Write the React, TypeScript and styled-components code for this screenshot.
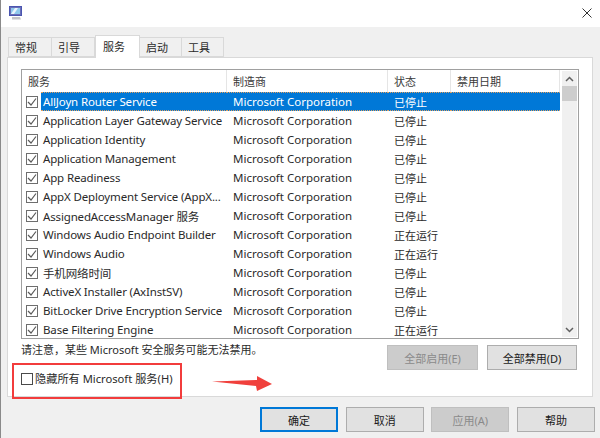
import React from "react"
import styled, { createGlobalStyle } from "styled-components"

const GlobalStyle = createGlobalStyle`
    html, body {
        margin: 0;
        padding: 0;
        background: #fff;
    }
    * {
        box-sizing: border-box;
    }
`;

const FONT = `"Noto Sans", "Noto Sans CJK SC", sans-serif`;
const COLUMNS = "205px 161px 63px 1fr";

const Window = styled.div`
    position: relative;
    width: 600px;
    height: 438px;
    display: flex;
    flex-direction: column;
    overflow: hidden;
    background: #f0f0f0;
    border-left: 1px solid #8a8a8a;
    font-family: ${FONT};
    font-size: 11.5px;
    color: #2a2a2a;
`;

const TitleBar = styled.div`
    height: 27px;
    flex: none;
    background: #fff;
    display: flex;
    align-items: center;
    justify-content: space-between;
    padding: 0 8px 1px 8px;
`;

const Body = styled.div`
    flex: 1;
    display: flex;
    flex-direction: column;
    padding: 8px 6px 0 6px;
`;

const TabStrip = styled.div`
    display: flex;
    height: 22px;
    align-items: flex-end;
    padding-left: 1px;
`;

const Tab = styled.div<{ $active?: boolean; $width: number }>`
    width: ${(p) => p.$width}px;
    height: ${(p) => (p.$active ? 23 : 20)}px;
    margin-bottom: ${(p) => (p.$active ? -1 : 0)}px;
    padding: ${(p) => (p.$active ? "0 0 2px 7px" : "0 0 0 6px")};
    background: ${(p) => (p.$active ? "#fff" : "#f0f0f0")};
    border: 1px solid #d9d9d9;
    border-bottom: ${(p) => (p.$active ? "none" : "1px solid #d9d9d9")};
    border-left: ${(p) => (p.$active ? "1px solid #d9d9d9" : "none")};
    display: flex;
    align-items: center;
    font-size: 11px;
    position: relative;
    z-index: ${(p) => (p.$active ? 1 : 0)};

    &:first-child {
        border-left: 1px solid #d9d9d9;
    }
`;

const Panel = styled.div`
    width: 586px;
    height: 340px;
    background: #fff;
    border: 1px solid #d9d9d9;
    padding: 11px 14px 0 13px;
    display: flex;
    flex-direction: column;
`;

const ListBox = styled.div`
    width: 558px;
    height: 270px;
    flex: none;
    border: 1px solid #a0a0a0;
    display: flex;
`;

const ListArea = styled.div`
    width: 538px;
    display: flex;
    flex-direction: column;
    overflow: hidden;
`;

const HeaderRow = styled.div`
    height: 22px;
    flex: none;
    display: grid;
    grid-template-columns: ${COLUMNS};
`;

const HeaderCell = styled.div`
    padding-left: 6px;
    display: flex;
    align-items: center;
    border-right: 1px solid #e5e5e5;
    font-size: 11px;
    color: #3a3a3a;
`;

const Row = styled.div`
    height: 19px;
    flex: none;
    display: grid;
    grid-template-columns: ${COLUMNS};
    align-items: center;
`;

const NameCell = styled.div`
    display: flex;
    align-items: center;
    height: 19px;
    padding-left: 4px;
    white-space: nowrap;
    overflow: hidden;
`;

const NameLabel = styled.span<{ $selected?: boolean }>`
    display: flex;
    align-items: center;
    flex: 1;
    height: 19px;
    margin-left: 3px;
    padding-left: 2px;
    letter-spacing: -0.15px;
    background: ${(p) => (p.$selected ? "#0078d7" : "transparent")};
    color: ${(p) => (p.$selected ? "#fff" : "inherit")};
    border-top: ${(p) => (p.$selected ? "1px dotted #e0a060" : "none")};
    border-bottom: ${(p) => (p.$selected ? "1px dotted #e0a060" : "none")};
`;

const Cell = styled.div<{ $selected?: boolean; $cjk?: boolean }>`
    height: 19px;
    padding-left: 6px;
    display: flex;
    align-items: center;
    white-space: nowrap;
    font-size: ${(p) => (p.$cjk ? 11 : 11.5)}px;
    background: ${(p) => (p.$selected ? "#0078d7" : "transparent")};
    color: ${(p) => (p.$selected ? "#fff" : "inherit")};
    border-top: ${(p) => (p.$selected ? "1px dotted #e0a060" : "none")};
    border-bottom: ${(p) => (p.$selected ? "1px dotted #e0a060" : "none")};
`;

const CheckBox = styled.span`
    width: 12px;
    height: 12px;
    flex: none;
    border: 1px solid #6e6e6e;
    background: #fff;
    display: flex;
    align-items: center;
    justify-content: center;
`;

const ScrollBar = styled.div`
    width: 15px;
    margin: 1px 0 1px 2px;
    background: #f0f0f0;
    display: flex;
    flex-direction: column;
    align-items: stretch;
`;

const ScrollButton = styled.div`
    height: 15px;
    flex: none;
    display: flex;
    align-items: center;
    justify-content: center;
`;

const ScrollTrack = styled.div`
    flex: 1;
`;

const ScrollThumb = styled.div`
    height: 15px;
    background: #cdcdcd;
`;

const NoteRow = styled.div`
    display: flex;
    justify-content: space-between;
    padding: 6px 1px 0 0;
`;

const Note = styled.div`
    line-height: 16px;
    margin-top: -3px;
    font-size: 11px;
`;

const ButtonGroup = styled.div<{ $gap: number }>`
    display: flex;
    gap: ${(p) => p.$gap}px;
`;

const Button = styled.div<{ $width: number; $disabled?: boolean; $primary?: boolean }>`
    width: ${(p) => p.$width}px;
    height: 25px;
    display: flex;
    align-items: center;
    justify-content: center;
    font-size: 11px;
    background: ${(p) => (p.$disabled ? "#cccccc" : "#e1e1e1")};
    border: ${(p) => (p.$primary ? "2px solid #0078d7" : "1px solid #adadad")};
    border-color: ${(p) => (p.$disabled ? "#bfbfbf" : p.$primary ? "#0078d7" : "#adadad")};
    color: ${(p) => (p.$disabled ? "#8a8a8a" : "#1a1a1a")};
`;

const HideRow = styled.label`
    display: flex;
    align-items: center;
    gap: 2px;
    margin-top: 1px;
    line-height: 16px;
    font-size: 11.2px;
`;

const EmptyCheck = styled.span`
    width: 12px;
    height: 12px;
    flex: none;
    border: 1px solid #4a4a4a;
    background: #fff;
`;

const Footer = styled.div`
    display: flex;
    justify-content: flex-end;
    padding-top: 10px;
    margin-right: -1px;
`;

const Highlight = styled.div`
    position: absolute;
    left: 11px;
    top: 363px;
    width: 170px;
    height: 36px;
    border: 2px solid #f23c3c;
`;

const ArrowMark = styled.svg`
    position: absolute;
    left: 210px;
    top: 375px;
`;

const services = [
    ["AllJoyn Router Service", "已停止"],
    ["Application Layer Gateway Service", "已停止"],
    ["Application Identity", "已停止"],
    ["Application Management", "已停止"],
    ["App Readiness", "已停止"],
    ["AppX Deployment Service (AppX...", "已停止"],
    ["AssignedAccessManager 服务", "已停止"],
    ["Windows Audio Endpoint Builder", "正在运行"],
    ["Windows Audio", "正在运行"],
    ["手机网络时间", "已停止"],
    ["ActiveX Installer (AxInstSV)", "已停止"],
    ["BitLocker Drive Encryption Service", "已停止"],
    ["Base Filtering Engine", "正在运行"],
];

const tabs = [
    { label: "常规", width: 44 },
    { label: "引导", width: 43 },
    { label: "服务", width: 45, active: true },
    { label: "启动", width: 42 },
    { label: "工具", width: 42 },
];

function Check() {
    return (
        <svg width="10" height="10" viewBox="0 0 10 10" fill="none">
            <path d="M1 5 L4 8 L9 1.5" stroke="#5a5a5a" strokeWidth="1.2" />
        </svg>
    );
}

export default function App() {
    return (
        <>
            <GlobalStyle />
            <Window>
                <TitleBar>
                    <svg width="14" height="14" viewBox="0 0 14 14">
                        <rect x="0.5" y="0.5" width="12" height="9" fill="#6a6fb8" stroke="#4a55b0" />
                        <rect x="2" y="2" width="9" height="6" fill="#8fc8ec" />
                        <path d="M2 8 L6 2 L9 2 L5 8 Z" fill="#e8f4fc" />
                        <path d="M3 11 H11 L12 13.5 H3 Z" fill="#c4c4c8" />
                    </svg>
                    <svg width="10" height="10" viewBox="0 0 10 10" fill="none">
                        <path d="M0.5 0.5 L9.5 9.5 M9.5 0.5 L0.5 9.5" stroke="#333" strokeWidth="1" />
                    </svg>
                </TitleBar>
                <Body>
                    <TabStrip>
                        {tabs.map((t) => (
                            <Tab key={t.label} $width={t.width} $active={t.active}>{t.label}</Tab>
                        ))}
                    </TabStrip>
                    <Panel>
                        <ListBox>
                            <ListArea>
                                <HeaderRow>
                                    <HeaderCell>服务</HeaderCell>
                                    <HeaderCell>制造商</HeaderCell>
                                    <HeaderCell>状态</HeaderCell>
                                    <HeaderCell>禁用日期</HeaderCell>
                                </HeaderRow>
                                {services.map(([name, status], i) => (
                                    <Row key={name}>
                                        <NameCell>
                                            <CheckBox><Check /></CheckBox>
                                            <NameLabel $selected={i === 0}>{name}</NameLabel>
                                        </NameCell>
                                        <Cell $selected={i === 0}>Microsoft Corporation</Cell>
                                        <Cell $selected={i === 0} $cjk>{status}</Cell>
                                        <Cell $selected={i === 0} />
                                    </Row>
                                ))}
                            </ListArea>
                            <ScrollBar>
                                <ScrollButton>
                                    <svg width="9" height="6" viewBox="0 0 9 6" fill="none">
                                        <path d="M1 5 L4.5 1.5 L8 5" stroke="#606060" strokeWidth="1.5" />
                                    </svg>
                                </ScrollButton>
                                <ScrollThumb />
                                <ScrollTrack />
                                <ScrollButton>
                                    <svg width="9" height="6" viewBox="0 0 9 6" fill="none">
                                        <path d="M1 1 L4.5 4.5 L8 1" stroke="#606060" strokeWidth="1.5" />
                                    </svg>
                                </ScrollButton>
                            </ScrollBar>
                        </ListBox>
                        <NoteRow>
                            <Note>请注意，某些 Microsoft 安全服务可能无法禁用。</Note>
                            <ButtonGroup $gap={9}>
                                <Button $width={91} $disabled>全部启用(E)</Button>
                                <Button $width={90}>全部禁用(D)</Button>
                            </ButtonGroup>
                        </NoteRow>
                        <HideRow>
                            <EmptyCheck />
                            隐藏所有 Microsoft 服务(H)
                        </HideRow>
                    </Panel>
                    <Footer>
                        <ButtonGroup $gap={7.67}>
                            <Button $width={78} $primary>确定</Button>
                            <Button $width={78}>取消</Button>
                            <Button $width={78} $disabled>应用(A)</Button>
                            <Button $width={78}>帮助</Button>
                        </ButtonGroup>
                    </Footer>
                </Body>
                <Highlight />
                <ArrowMark width="62" height="17" viewBox="0 0 62 17">
                    <path d="M1 6.5 L46 5 L46 1 L61 9 L46 16 L45 11 Z" fill="#f0403c" />
                </ArrowMark>
            </Window>
        </>
    );
}
